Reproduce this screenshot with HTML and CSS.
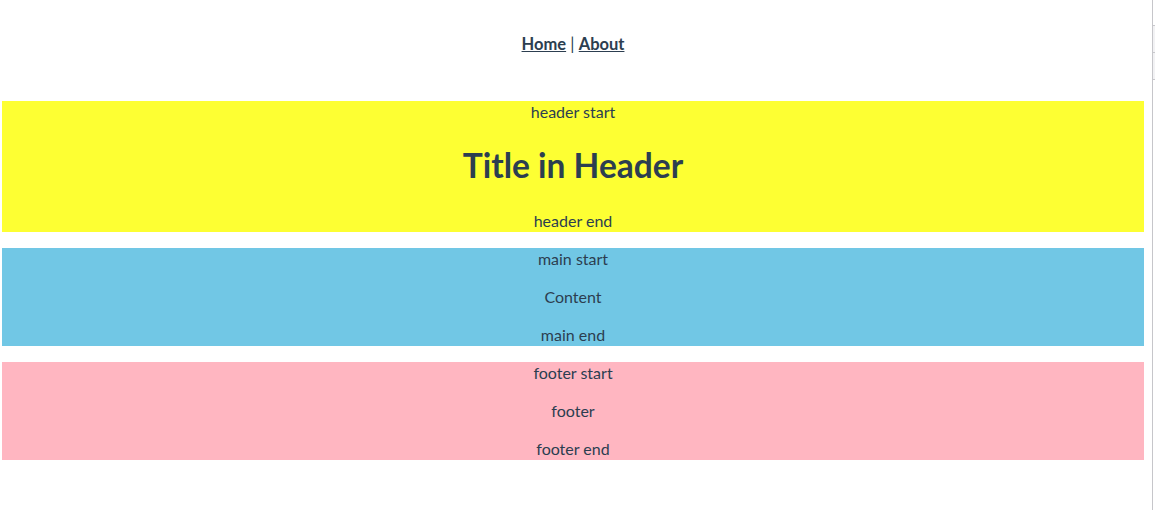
FILE: index.html
```html
<!DOCTYPE html>
<html lang="en">
<head>
<meta charset="utf-8">
<title>App</title>
<link rel="stylesheet" href="styles.css">
</head>
<body>
<div class="page">
  <div class="app">
    <nav class="nav">
      <a href="#" class="nav-link">Home</a> | <a href="#" class="nav-link">About</a>
    </nav>
    <header class="block block-header">
      header start
      <h1 class="title">Title in Header</h1>
      header end
    </header>
    <main class="block block-main">
      main start
      <p class="para">Content</p>
      main end
    </main>
    <footer class="block block-footer">
      footer start
      <p class="para">footer</p>
      footer end
    </footer>
  </div>
  <div class="gutter"></div>
  <div class="edge">
    <div class="edge-tab"></div>
    <div class="edge-tab"></div>
  </div>
</div>
</body>
</html>
```

FILE: styles.css
```css
html, body {
  margin: 0;
  padding: 0;
  background: #ffffff;
}

.page {
  display: flex;
  min-height: 510px;
}

.app {
  width: 1142px;
  margin-left: 2px;
  font-family: Lato, "Noto Sans", sans-serif;
  font-size: 16px;
  line-height: 22px;
  color: #2c3e50;
  text-align: center;
  -webkit-font-smoothing: antialiased;
}

.nav {
  padding: 33px 0 46px;
  font-size: 16.5px;
}

.nav-link {
  font-weight: bold;
  color: #2c3e50;
}

.block {
  display: block;
  margin-bottom: 16px;
}

.block-header {
  background: #fdff33;
}

.block-main {
  background: #71c7e5;
}

.block-footer {
  background: #ffb6c1;
}

.title {
  font-size: 33.5px;
  line-height: 44px;
  margin: 20px 0 23px;
  font-weight: bold;
}

.para {
  margin: 16px 0;
}

.gutter {
  width: 8px;
}

.edge {
  width: 2px;
  border-left: 1px solid #c6c6ca;
  padding-top: 25px;
  display: flex;
  flex-direction: column;
}

.edge-tab {
  height: 26px;
  border-top: 1px solid #c8c8cc;
  border-bottom: 1px solid #c8c8cc;
  background: #f2f2f4;
}

.edge-tab + .edge-tab {
  border-top: none;
}
```
